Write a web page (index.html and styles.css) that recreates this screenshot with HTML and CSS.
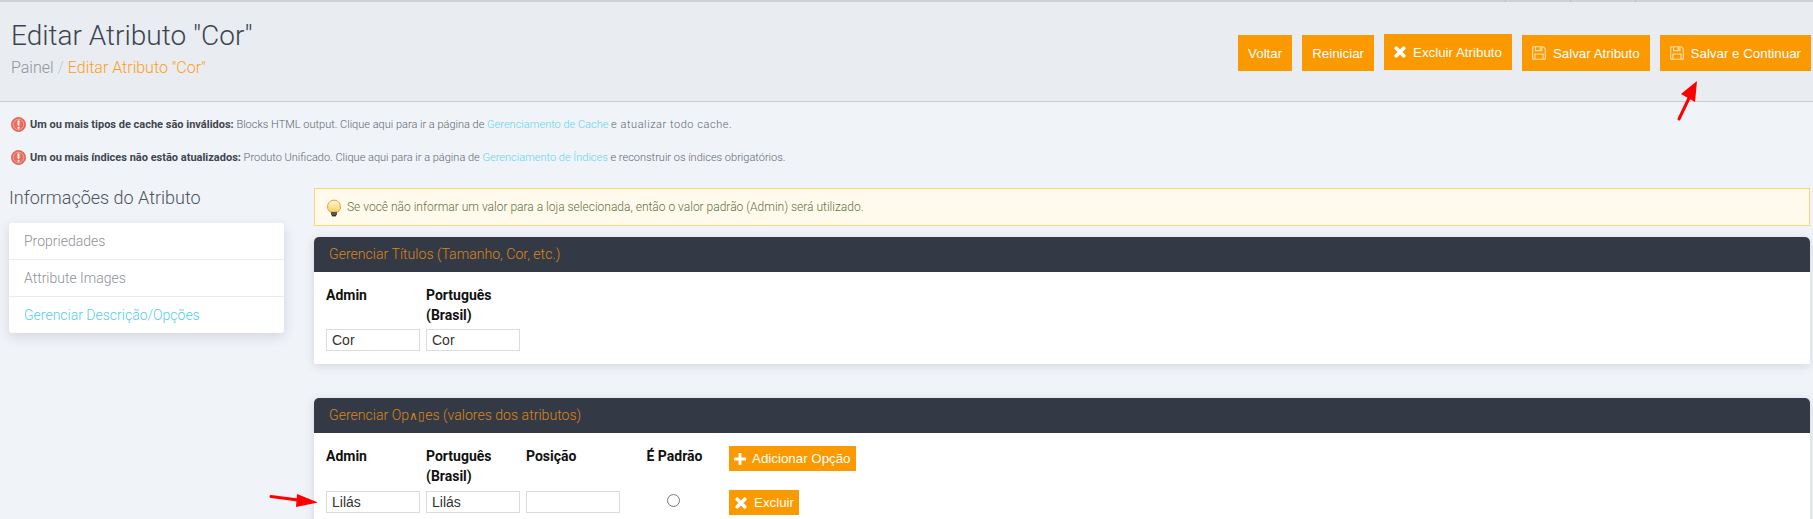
FILE: index.html
```html
<!DOCTYPE html>
<html lang="pt-BR">
<head>
<meta charset="utf-8">
<title>Editar Atributo "Cor"</title>
<link rel="stylesheet" href="styles.css">
</head>
<body>
<svg width="0" height="0" class="defs">
  <defs>
    <symbol id="i-save" viewBox="0 0 14 14"><path d="M1.2.7h10l2.1 2.1v9.5a1 1 0 0 1-1 1H1.7a1 1 0 0 1-1-1V1.2a.5.5 0 0 1 .5-.5z" fill="none" stroke="currentColor" stroke-width="1.1"/><path d="M3.5 1v3.6h6.4V1M3 13V8h8v5" fill="none" stroke="currentColor" stroke-width="1.1"/><rect x="7.6" y="1.3" width="1.3" height="2.4" fill="currentColor"/></symbol>
    <symbol id="i-x" viewBox="0 0 14 14"><path d="M2.6 2.6l8.8 8.8M11.4 2.6l-8.8 8.8" stroke="currentColor" stroke-width="4.2" stroke-linecap="round"/></symbol>
    <symbol id="i-plus" viewBox="0 0 14 14"><path d="M7 1v12M1 7h12" stroke="currentColor" stroke-width="3.4" stroke-linecap="round"/></symbol>
    <symbol id="i-err" viewBox="0 0 16 16"><circle cx="8" cy="8" r="7.5" fill="#e2705f" stroke="#d2553f" stroke-width=".8"/><circle cx="8" cy="8" r="5.6" fill="#ee6a5a" stroke="#f5b4a8" stroke-width=".8"/><rect x="7" y="3.4" width="2" height="6" rx="1" fill="#fff"/><circle cx="8" cy="11.5" r="1.2" fill="#fff"/></symbol>
    <linearGradient id="bulb" x1="0" y1="0" x2="0" y2="1"><stop offset="0" stop-color="#fff8dc"/><stop offset="1" stop-color="#f8cf6a"/></linearGradient>
  </defs>
</svg>

<div class="ticks"><i></i><i></i><i></i></div>
<header class="head">
  <div class="head-text">
    <h1 class="title">Editar Atributo "Cor"</h1>
    <div class="crumbs"><span class="crumb-root">Painel</span> <span class="crumb-sep">/</span> <span class="crumb-now">Editar Atributo "Cor"</span></div>
  </div>
  <div class="actions">
    <a class="btn">Voltar</a>
    <a class="btn">Reiniciar</a>
    <a class="btn btn-up"><svg class="ico ico-x"><use href="#i-x"/></svg>Excluir Atributo</a>
    <a class="btn"><svg class="ico ico-soft"><use href="#i-save"/></svg>Salvar Atributo</a>
    <a class="btn"><svg class="ico ico-soft"><use href="#i-save"/></svg>Salvar e Continuar</a>
  </div>
</header>

<section class="messages">
  <p class="msg"><svg class="msg-ico"><use href="#i-err"/></svg><span><b>Um ou mais tipos de cache são inválidos:</b> Blocks HTML output. Clique aqui para ir a página de <a class="link">Gerenciamento de Cache</a> <span class="msg-tail">e atualizar todo cache.</span></span></p>
  <p class="msg"><svg class="msg-ico"><use href="#i-err"/></svg><span><b>Um ou mais índices não estão atualizados:</b> Produto Unificado. Clique aqui para ir a página de <a class="link">Gerenciamento de Índices</a> e reconstruir os índices obrigatórios.</span></p>
</section>

<main class="layout">
  <aside class="side">
    <h2 class="side-title">Informações do Atributo</h2>
    <nav class="tabs">
      <a class="tab">Propriedades</a>
      <a class="tab">Attribute Images</a>
      <a class="tab tab-on">Gerenciar Descrição/Opções</a>
    </nav>
  </aside>
  <div class="content">
    <div class="notice">
      <svg class="bulb" viewBox="0 0 16 18"><path d="M8 1.2a6.6 6.6 0 0 0-4 11.8h8A6.6 6.6 0 0 0 8 1.2z" fill="url(#bulb)" stroke="#e8a33a" stroke-width="1"/><rect x="5" y="13" width="6" height="3.2" fill="#56544e"/><rect x="6" y="16" width="4" height="1.4" fill="#333"/></svg>
      <span>Se você não informar um valor para a loja selecionada, então o valor padrão (Admin) será utilizado.</span>
    </div>

    <section class="panel panel-titles">
      <h3 class="panel-head">Gerenciar Títulos (Tamanho, Cor, etc.)</h3>
      <div class="panel-body grid">
        <div class="th">Admin</div>
        <div class="th">Português (Brasil)</div>
        <input class="field" value="Cor">
        <input class="field" value="Cor">
      </div>
    </section>

    <section class="panel">
      <h3 class="panel-head">Gerenciar Op<span class="bad">&#x2227;&#x25AF;</span>es (valores dos atributos)</h3>
      <div class="panel-body grid grid-options">
        <div class="th">Admin</div>
        <div class="th">Português (Brasil)</div>
        <div class="th">Posição</div>
        <div class="th th-center">É Padrão</div>
        <div><a class="btn btn-sm"><svg class="ico"><use href="#i-plus"/></svg>Adicionar Opção</a></div>
        <input class="field" value="Lilás">
        <input class="field" value="Lilás">
        <input class="field" value="">
        <div class="radio-cell"><span class="radio"></span></div>
        <div class="btn-cell"><a class="btn btn-sm btn-del"><svg class="ico"><use href="#i-x"/></svg>Excluir</a></div>
      </div>
    </section>
  </div>
</main>

<svg class="arrow arrow-top" width="30" height="45" viewBox="0 0 30 45"><path d="M3 41L15 16" stroke="#f00" stroke-width="3" stroke-linecap="round"/><path d="M21 3L19 24 5 16z" fill="#f00"/></svg>
<svg class="arrow arrow-left" width="56" height="16" viewBox="0 0 56 16"><path d="M3 3.5L30 7" stroke="#f00" stroke-width="3" stroke-linecap="round"/><path d="M50 9.5L28 14 29 1z" fill="#f00"/></svg>
</body>
</html>
```
FILE: styles.css
```css
* { box-sizing: border-box; }
html, body { margin: 0; height: 519px; overflow: hidden; }
body {
  position: relative;
  background: #f0f3f8;
  font-family: Roboto, "Liberation Sans", sans-serif;
  color: #555;
}
.defs { position: absolute; }

.ticks {
  height: 2px;
  background: #cfd1d4;
  display: flex;
  justify-content: flex-end;
  gap: 64px;
  padding-right: 177px;
}
.ticks i { width: 1px; height: 2px; background: #bcbec2; }

.head {
  height: 100px;
  background: #e9ecf1;
  border-bottom: 1px solid #c8cbce;
  display: flex;
  justify-content: space-between;
  padding: 33px 2px 0 11px;
}
.title {
  margin: -19px 0 0;
  font-size: 28px;
  line-height: 40px;
  font-weight: 300;
  color: #3d4450;
}
.crumbs { margin-top: 2px; font-size: 16px; line-height: 20px; font-weight: 300; }
.crumb-root { color: #8f949c; }
.crumb-sep { color: #c5c8cd; }
.crumb-now { color: #fb9f1b; }

.actions { display: flex; gap: 10px; align-items: flex-start; }
.btn {
  display: inline-flex;
  align-items: center;
  height: 36px;
  padding: 0 10px;
  background: #fa9900;
  color: #fff;
  font-family: "Liberation Sans", Arial, sans-serif;
  font-size: 13.33px;
  white-space: nowrap;
}
.btn-up { margin-top: -1px; }
.btn-sm { height: 25px; padding: 0 5px; }
.btn-del { padding-left: 6px; }
.ico { width: 14px; height: 14px; margin-right: 7px; flex: none; }
.ico-x { width: 12px; height: 12px; }
.btn-sm .ico { width: 12px; height: 12px; margin-right: 6px; }
.btn-del .ico { margin-right: 7px; }
.ico-soft { color: #ffe2b5; }

.messages { padding-top: 14px; }
.msg {
  margin: 0 0 17px;
  height: 16px;
  display: flex;
  align-items: center;
  padding-left: 11px;
  font-size: 11px;
  font-weight: 300;
  color: #5f6670;
}
.msg b { font-weight: 700; color: #3f4650; }
.msg-tail { letter-spacing: .55px; }
.msg-ico { width: 15px; height: 15px; margin-right: 4px; flex: none; }
.link { color: #5dd5ee; }

.layout { display: flex; padding: 0 3px 0 9px; margin-top: 23px; }
.side { width: 275px; flex: none; margin-top: -2px; }
.side-title {
  margin: 0 0 13px;
  font-size: 18px;
  line-height: 24px;
  font-weight: 300;
  color: #4c535e;
}
.tabs {
  background: #fff;
  border-radius: 3px;
  box-shadow: 0 4px 12px rgba(60, 70, 90, .16);
}
.tab {
  display: block;
  height: 37px;
  line-height: 36px;
  padding-left: 15px;
  font-size: 14px;
  font-weight: 300;
  color: #8d9298;
  border-bottom: 1px solid #e8ebef;
}
.tab-on { color: #55cdee; border-bottom: 0; height: 36px; }

.content { flex: 1; margin-left: 30px; }
.notice {
  height: 38px;
  display: flex;
  align-items: center;
  padding-left: 11px;
  background: #fffaeb;
  border: 1px solid #fbd779;
  font-size: 12px;
  font-weight: 300;
  color: #5f7245;
}
.bulb { width: 16px; height: 18px; margin-right: 5px; margin-top: 2px; flex: none; }

.panel {
  margin-top: 11px;
  background: #fff;
  border-radius: 5px 5px 0 0;
  box-shadow: 0 2px 10px rgba(60, 70, 90, .16);
}
.panel-titles { margin-bottom: 34px; }
.panel-head {
  margin: 0;
  height: 35px;
  line-height: 34px;
  padding-left: 15px;
  background: #333a46;
  border-radius: 5px 5px 0 0;
  font-size: 14.1px;
  font-weight: 300;
  color: #dc8518;
}
.bad { font-family: "DejaVu Sans", sans-serif; font-size: 12px; }
.panel-body { padding: 13px 12px; }
.grid {
  display: grid;
  grid-template-columns: 94px 94px;
  column-gap: 6px;
  row-gap: 4px;
}
.grid-options {
  grid-template-columns: 94px 94px 94px 97px max-content;
  row-gap: 5px;
  padding-bottom: 20px;
}
.th {
  font-family: Roboto, sans-serif;
  font-size: 14px;
  line-height: 20px;
  font-weight: 700;
  color: #111;
}
.th-center { text-align: center; }
.field {
  width: 94px;
  height: 22px;
  padding: 0 5px;
  border: 1px solid #dcdcdc;
  background: #fff;
  font-family: "Liberation Sans", Arial, sans-serif;
  font-size: 14px;
  color: #333;
  outline: 0;
}
.radio-cell { display: flex; justify-content: center; padding-top: 3px; padding-right: 3px; }
.radio {
  width: 13px;
  height: 13px;
  border: 1px solid #767676;
  border-radius: 50%;
  background: #fff;
}
.btn-cell { margin-top: -1px; }

.arrow { position: absolute; }
.arrow-top { left: 1676px; top: 78px; }
.arrow-left { left: 268px; top: 493px; }
```
